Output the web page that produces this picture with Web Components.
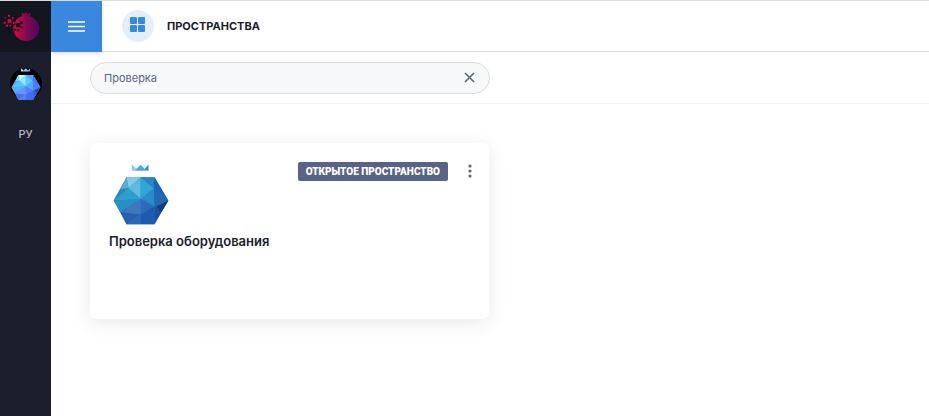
<!DOCTYPE html>
<html lang="ru">
<head>
<meta charset="utf-8">
<title>Пространства</title>
<style>
  body {
    margin: 0;
    font-family: Inter, "Open Sans", sans-serif;
    color: #1a1c2b;
    background: #fff;
  }
</style>
</head>
<body>
<app-shell>
  <side-nav slot="side"></side-nav>
  <top-bar slot="top" heading="Пространства"></top-bar>
  <search-bar slot="search" value="Проверка"></search-bar>
  <space-card badge="Открытое пространство">Проверка оборудования</space-card>
</app-shell>

<script>
class AppShell extends HTMLElement {
    constructor() {
        super();

        const template = `
            <style>
                :host {
                    display: grid;
                    grid-template-columns: 51px 1fr;
                    min-height: 100vh;
                    box-sizing: border-box;
                    border-top: 1px solid #dcdde2;
                }

                main {
                    display: grid;
                    grid-template-columns: repeat(auto-fill, minmax(300px, 399px));
                    padding: 39px;
                    gap: 24px;
                }
            </style>

            <slot name="side"></slot>
            <div>
                <slot name="top"></slot>
                <slot name="search"></slot>
                <main><slot></slot></main>
            </div>
        `;

        let shadow = this.attachShadow({ mode: 'open' });
        shadow.innerHTML = template;
    }
}

class GemLogo extends HTMLElement {
    constructor() {
        super();

        const template = `
            <style>
                :host {
                    display: block;
                }

                svg {
                    display: block;
                    width: 100%;
                    height: 100%;
                }
            </style>

            <svg viewBox="39 27 170 184" aria-hidden="true">
                <path fill="#2b80bb" d="M80 67h85l42 70-42 72H80L41 137z"/>
                <path fill="#86cae6" d="M80 67h43L86 100z"/>
                <path fill="#5fb9de" d="M123 67v66L86 100z"/>
                <path fill="#2fa6d6" d="M123 67l40 33-40 33z"/>
                <path fill="#2b83c0" d="M123 67h42l-2 33z"/>
                <path fill="#55aed6" d="M80 67l6 33-24 5z"/>
                <path fill="#2d86bd" d="M62 103l24-3-45 37z"/>
                <path fill="#2d9fce" d="M86 100l37 33-82 4z"/>
                <path fill="#1f62b0" d="M165 67l42 70-44-37z"/>
                <path fill="#2b8bc9" d="M163 100l-40 33 42 22z"/>
                <path fill="#2468b4" d="M163 100l44 37-42 18z"/>
                <path fill="#2a8fc4" d="M41 137l82-4-61 40z"/>
                <path fill="#3f77bf" d="M123 133l-43 27v16l43 4z"/>
                <path fill="#3a72bb" d="M80 160l-18 13 18 3z"/>
                <path fill="#2a6cb8" d="M123 133l42 22-42 25z"/>
                <path fill="#1c57a8" d="M165 155l42-18-22 37z"/>
                <path fill="#123d75" d="M207 137l-22 37-14-17z"/>
                <path fill="#2460ad" d="M62 173l61 7-43 29z"/>
                <path fill="#2d68b6" d="M123 180v29H80z"/>
                <path fill="#1d5ab0" d="M165 155l-42 25v29h42z"/>
                <path fill="#1b4f9f" d="M165 155l20 19-20 35z"/>
                <path fill="#8ccbe6" d="M96 47V28l14 13-6 6z"/>
                <path fill="#4fa9d3" d="M104 47l19-18 18 18z"/>
                <path fill="#3b91c4" d="M147 47V28l-12 13 6 6z"/>
            </svg>
        `;

        let shadow = this.attachShadow({ mode: 'open' });
        shadow.innerHTML = template;
    }
}

class SideNav extends HTMLElement {
    constructor() {
        super();

        const template = `
            <style>
                :host {
                    display: flex;
                    flex-direction: column;
                    align-items: center;
                    background: #1b1e2c;
                }

                a {
                    display: block;
                }

                .brand {
                    align-self: stretch;
                    height: 51px;
                    background: #13151f;
                }

                .brand svg {
                    display: block;
                    width: 40px;
                    height: 36px;
                    padding: 7px 2px;
                }

                .space {
                    display: grid;
                    place-items: center;
                    width: 32px;
                    height: 32px;
                    margin-top: 16px;
                    border-radius: 50%;
                    background: #000;
                }

                gem-logo {
                    width: 30px;
                    height: 32px;
                    filter: hue-rotate(14deg) brightness(1.3);
                }

                button {
                    margin-top: 26px;
                    padding: 0;
                    border: 0;
                    background: none;
                    font: 500 11px/16px Inter, sans-serif;
                    color: #b9bbc4;
                }
            </style>

            <a class="brand" href="#" aria-label="Главная">
                <svg viewBox="0 0 120 108">
                    <defs>
                        <linearGradient id="pomegranate">
                            <stop offset="0" stop-color="#d8083f"/>
                            <stop offset=".5" stop-color="#84094f"/>
                            <stop offset="1" stop-color="#4b085d"/>
                        </linearGradient>
                    </defs>
                    <path fill="url(#pomegranate)" d="M60 24l-1-10 7 4 6-5 6 5 8-4-2 11c16 6 28 20 28 35 0 23-18 39-39 39-23 0-39-17-39-39 0-17 10-30 26-36z"/>
                    <g fill="#13151f">
                        <path d="M42 46h13v12H42zM54 40h8v8h-8zM36 62h7v6h-7zM46 64h6v6h-6zM56 55h5v5h-5zM30 40h10v12H30z"/>
                    </g>
                    <g fill="#d8083f">
                        <path d="M17 34h11v11H17zM5 41h6v6H5zM8 27h4v4H8zM18 20h6v6h-6zM30 28h5v5h-5zM12 50h6v6h-6zM22 50h5v5h-5zM33 43h5v5h-5z"/>
                    </g>
                </svg>
            </a>
            <a class="space" href="#" aria-label="Пространство"><gem-logo></gem-logo></a>
            <button type="button">РУ</button>
        `;

        let shadow = this.attachShadow({ mode: 'open' });
        shadow.innerHTML = template;
    }
}

class TopBar extends HTMLElement {
    constructor() {
        super();

        const template = `
            <style>
                :host {
                    display: flex;
                    align-items: center;
                    height: 50px;
                    border-bottom: 1px solid #dcdde2;
                }

                button {
                    display: grid;
                    place-items: center;
                    align-self: flex-start;
                    flex: none;
                    width: 51px;
                    height: 51px;
                    padding: 0;
                    border: 0;
                    background: #3a87df;
                    box-shadow: 0 2px 4px rgba(0, 0, 0, 0.12);
                }

                .icon {
                    display: grid;
                    place-items: center;
                    width: 32px;
                    height: 32px;
                    margin: 0 13px 0 20px;
                    border-radius: 50%;
                    background: #e4eefb;
                }

                .icon svg {
                    margin-bottom: 2px;
                }

                h1 {
                    margin: 0;
                    font-size: 11px;
                    line-height: 16px;
                    font-weight: 700;
                    text-transform: uppercase;
                }
            </style>

            <button type="button" aria-label="Меню">
                <svg width="17" height="11" viewBox="0 0 17 11" stroke="#fff" stroke-width="1.4">
                    <path d="M0 1h17M0 5.5h17M0 10h17"/>
                </svg>
            </button>
            <span class="icon">
                <svg width="16" height="16" viewBox="0 0 16 16" fill="#3a87df">
                    <rect width="7" height="7" rx="1"/>
                    <rect x="8" width="7" height="7" rx="1"/>
                    <rect y="8" width="7" height="7" rx="1"/>
                    <rect x="8" y="8" width="7" height="7" rx="1"/>
                </svg>
            </span>
            <h1></h1>
        `;

        let shadow = this.attachShadow({ mode: 'open' });
        shadow.innerHTML = template;
    }

    connectedCallback() {
        this.shadowRoot.querySelector('h1').textContent = this.getAttribute('heading');
    }
}

class SearchBar extends HTMLElement {
    constructor() {
        super();

        const template = `
            <style>
                :host {
                    display: block;
                    padding: 10px 39px 9px;
                    border-bottom: 1px solid #eeeff2;
                }

                form {
                    display: flex;
                    align-items: center;
                    box-sizing: border-box;
                    max-width: 400px;
                    height: 32px;
                    padding: 0 13px;
                    border: 1px solid #dcdee4;
                    border-radius: 16px;
                    background: #f6f8fa;
                }

                input {
                    flex: 1;
                    min-width: 0;
                    padding: 0;
                    border: 0;
                    outline: 0;
                    background: none;
                    font: 400 11px/16px Inter, sans-serif;
                    color: #5a6285;
                }

                button {
                    display: grid;
                    padding: 0;
                    border: 0;
                    background: none;
                }
            </style>

            <form>
                <input type="text" aria-label="Поиск">
                <button type="reset" aria-label="Очистить">
                    <svg width="12" height="12" viewBox="0 0 12 12" stroke="#5a6285" stroke-width="1.6">
                        <path d="M1 1l9 9M10 1l-9 9"/>
                    </svg>
                </button>
            </form>
        `;

        let shadow = this.attachShadow({ mode: 'open' });
        shadow.innerHTML = template;
    }

    connectedCallback() {
        this.shadowRoot.querySelector('input').value = this.getAttribute('value');
    }
}

class SpaceCard extends HTMLElement {
    constructor() {
        super();

        const template = `
            <style>
                :host {
                    display: block;
                    box-sizing: border-box;
                    min-height: 176px;
                    padding: 19px;
                    border-radius: 6px;
                    background: #fff;
                    box-shadow: 0 4px 20px rgba(0, 0, 0, 0.09);
                }

                header {
                    display: flex;
                    align-items: flex-start;
                }

                gem-logo {
                    width: 56px;
                    height: 61px;
                    margin: 2px auto 0 4px;
                }

                .badge {
                    padding: 0 8px;
                    border-radius: 2px;
                    background: #5a6285;
                    font-family: Roboto, sans-serif;
                    font-size: 10px;
                    line-height: 19px;
                    font-weight: 900;
                    text-transform: uppercase;
                    color: #fff;
                }

                button {
                    display: grid;
                    place-items: center;
                    width: 18px;
                    height: 18px;
                    margin-left: 13px;
                    margin-right: -9px;
                    padding: 0;
                    border: 0;
                    background: none;
                }

                h2 {
                    margin: 7px 0 0;
                    font-size: 13px;
                    line-height: 18px;
                    font-weight: 600;
                }
            </style>

            <header>
                <gem-logo></gem-logo>
                <span class="badge"></span>
                <button type="button" aria-label="Действия">
                    <svg width="4" height="14" viewBox="0 0 4 14" fill="#5a6285">
                        <circle cx="2" cy="2" r="1.6"/>
                        <circle cx="2" cy="7" r="1.6"/>
                        <circle cx="2" cy="12" r="1.6"/>
                    </svg>
                </button>
            </header>
            <h2><slot></slot></h2>
        `;

        let shadow = this.attachShadow({ mode: 'open' });
        shadow.innerHTML = template;
    }

    connectedCallback() {
        this.shadowRoot.querySelector('.badge').textContent = this.getAttribute('badge');
    }
}

customElements.define('gem-logo', GemLogo);
customElements.define('side-nav', SideNav);
customElements.define('top-bar', TopBar);
customElements.define('search-bar', SearchBar);
customElements.define('space-card', SpaceCard);
customElements.define('app-shell', AppShell);
</script>
</body>
</html>
